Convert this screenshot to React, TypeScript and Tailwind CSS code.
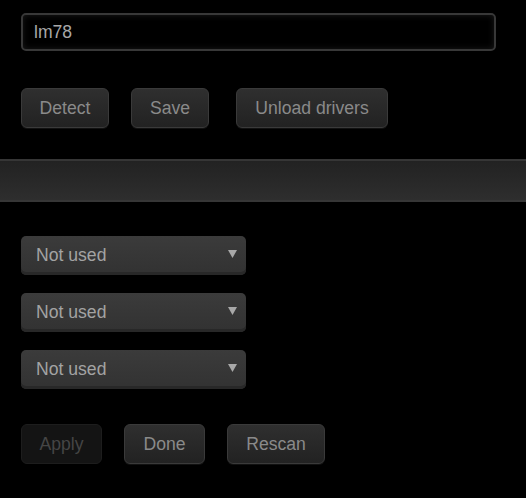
import { useState } from "react";

const font = "font-['Liberation_Sans',Arial,sans-serif] text-[17.6px]";

const btn =
  "h-[40px] rounded-[6px] border border-[#3a3a3a] bg-gradient-to-b from-[#2f2f2f] to-[#222222] text-[#8a8a8a] shadow-[0_1px_0_#111]";

const btnDisabled =
  "h-[40px] rounded-[6px] border border-[#1d1d1d] bg-[#141414] text-[#454545]";

function Chooser({ value, onChange }: { value: string; onChange: (v: string) => void }) {
  return (
    <div className="relative w-[225px]">
      <select
        value={value}
        onChange={(e) => onChange(e.target.value)}
        className={`${font} h-[39px] w-full appearance-none rounded-[5px] bg-gradient-to-b from-[#3b3b3b] to-[#323232] pb-[1px] pl-[15px] text-[#a3a3a3] shadow-[inset_0_-3px_0_#282828] outline-none`}
      >
        <option>Not used</option>
        <option>CPU</option>
        <option>System</option>
      </select>
      <svg
        width="9"
        height="8"
        viewBox="0 0 9 8"
        className="pointer-events-none absolute right-[9px] top-[14px]"
      >
        <polygon points="0,0 9,0 4.5,8" fill="#a8a8a8" />
      </svg>
    </div>
  );
}

export default function App() {
  const [chip, setChip] = useState("lm78");
  const [sensors, setSensors] = useState(["Not used", "Not used", "Not used"]);

  return (
    <div className={`${font} min-h-[498px] w-[526px] bg-black`}>
      <div className="pl-[21px] pt-[13px]">
        <input
          value={chip}
          onChange={(e) => setChip(e.target.value)}
          className={`${font} h-[38px] w-[475px] rounded-[5px] border-2 border-[#383838] bg-black px-[11px] text-[#a8a8a8] shadow-[inset_0_0_6px_#1a1a1a] outline-none`}
        />
      </div>

      <div className="mt-[37px] flex pl-[21px]">
        <button className={`${btn} w-[88px]`}>Detect</button>
        <button className={`${btn} ml-[22px] w-[78px]`}>Save</button>
        <button className={`${btn} ml-[27px] w-[152px]`}>Unload drivers</button>
      </div>

      <div className="mt-[31px] h-[43px] border-y-2 border-[#363636] bg-gradient-to-b from-[#222222] to-[#2e2e2e]" />

      <div className="mt-[34px] flex flex-col gap-[18px] pl-[21px]">
        {sensors.map((s, i) => (
          <Chooser
            key={i}
            value={s}
            onChange={(v) => setSensors((prev) => prev.map((p, j) => (j === i ? v : p)))}
          />
        ))}
      </div>

      <div className="mt-[35px] flex gap-[22px] pl-[21px]">
        <button disabled className={`${btnDisabled} w-[81px]`}>
          Apply
        </button>
        <button className={`${btn} w-[81px]`}>Done</button>
        <button className={`${btn} w-[98px]`}>Rescan</button>
      </div>
    </div>
  );
}
